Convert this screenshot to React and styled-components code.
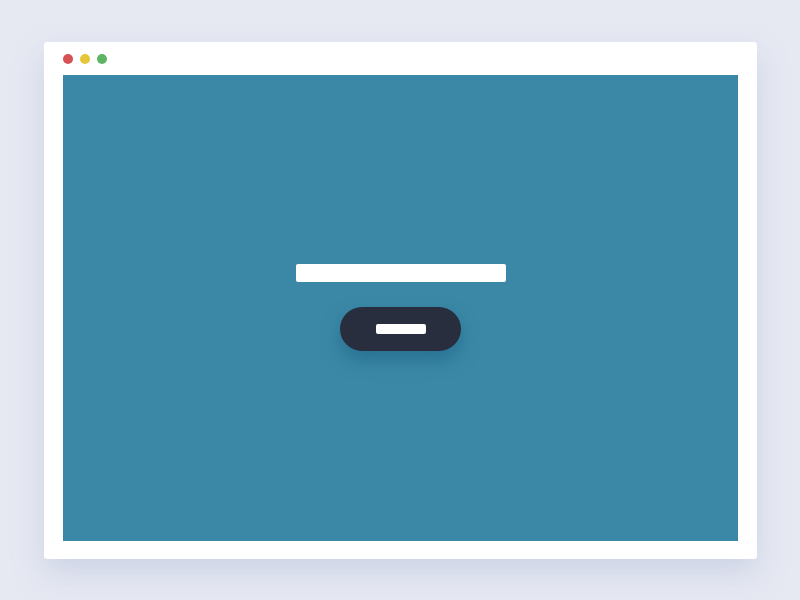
import styled, { createGlobalStyle } from "styled-components";

const GlobalStyle = createGlobalStyle`
	html, body {
		margin: 0;
		padding: 0;
		background: #e6e9f2;
		font-family: "Liberation Sans", Arial, sans-serif;
	}
`;

const Page = styled.div`
	width: 800px;
	height: 600px;
	box-sizing: border-box;
	padding: 42px 43px 41px 44px;
`;

const Window = styled.div`
	width: 713px;
	height: 517px;
	box-sizing: border-box;
	background: #ffffff;
	border-radius: 3px;
	padding: 12px 19px 18px 19px;
	display: flex;
	flex-direction: column;
	box-shadow: 0 14px 30px rgba(160, 172, 210, 0.35);
`;

const TitleBar = styled.div`
	display: flex;
	gap: 7px;
	height: 10px;
	margin-bottom: 11px;
`;

const Dot = styled.span`
	width: 10px;
	height: 10px;
	border-radius: 50%;
	background: ${(p) => p.color};
`;

const Stage = styled.div`
	flex: 1;
	background: #3b88a6;
	display: flex;
	flex-direction: column;
	align-items: center;
	justify-content: center;
	gap: 25px;
	padding-bottom: 2px;
`;

const Field = styled.div`
	width: 210px;
	height: 18px;
	background: #ffffff;
	border-radius: 2px;
`;

const Button = styled.div`
	width: 121px;
	height: 44px;
	border-radius: 22px;
	background: #282e3e;
	display: flex;
	align-items: center;
	justify-content: center;
	box-shadow: 0 9px 18px rgba(22, 90, 128, 0.5);
`;

const Label = styled.div`
	width: 50px;
	height: 10px;
	background: #ffffff;
	border-radius: 2px;
`;

export default function App() {
	return (
		<>
			<GlobalStyle />
			<Page>
				<Window>
					<TitleBar>
						<Dot color="#d65254" />
						<Dot color="#e6c53a" />
						<Dot color="#5fb463" />
					</TitleBar>
					<Stage>
						<Field />
						<Button>
							<Label />
						</Button>
					</Stage>
				</Window>
			</Page>
		</>
	);
}
